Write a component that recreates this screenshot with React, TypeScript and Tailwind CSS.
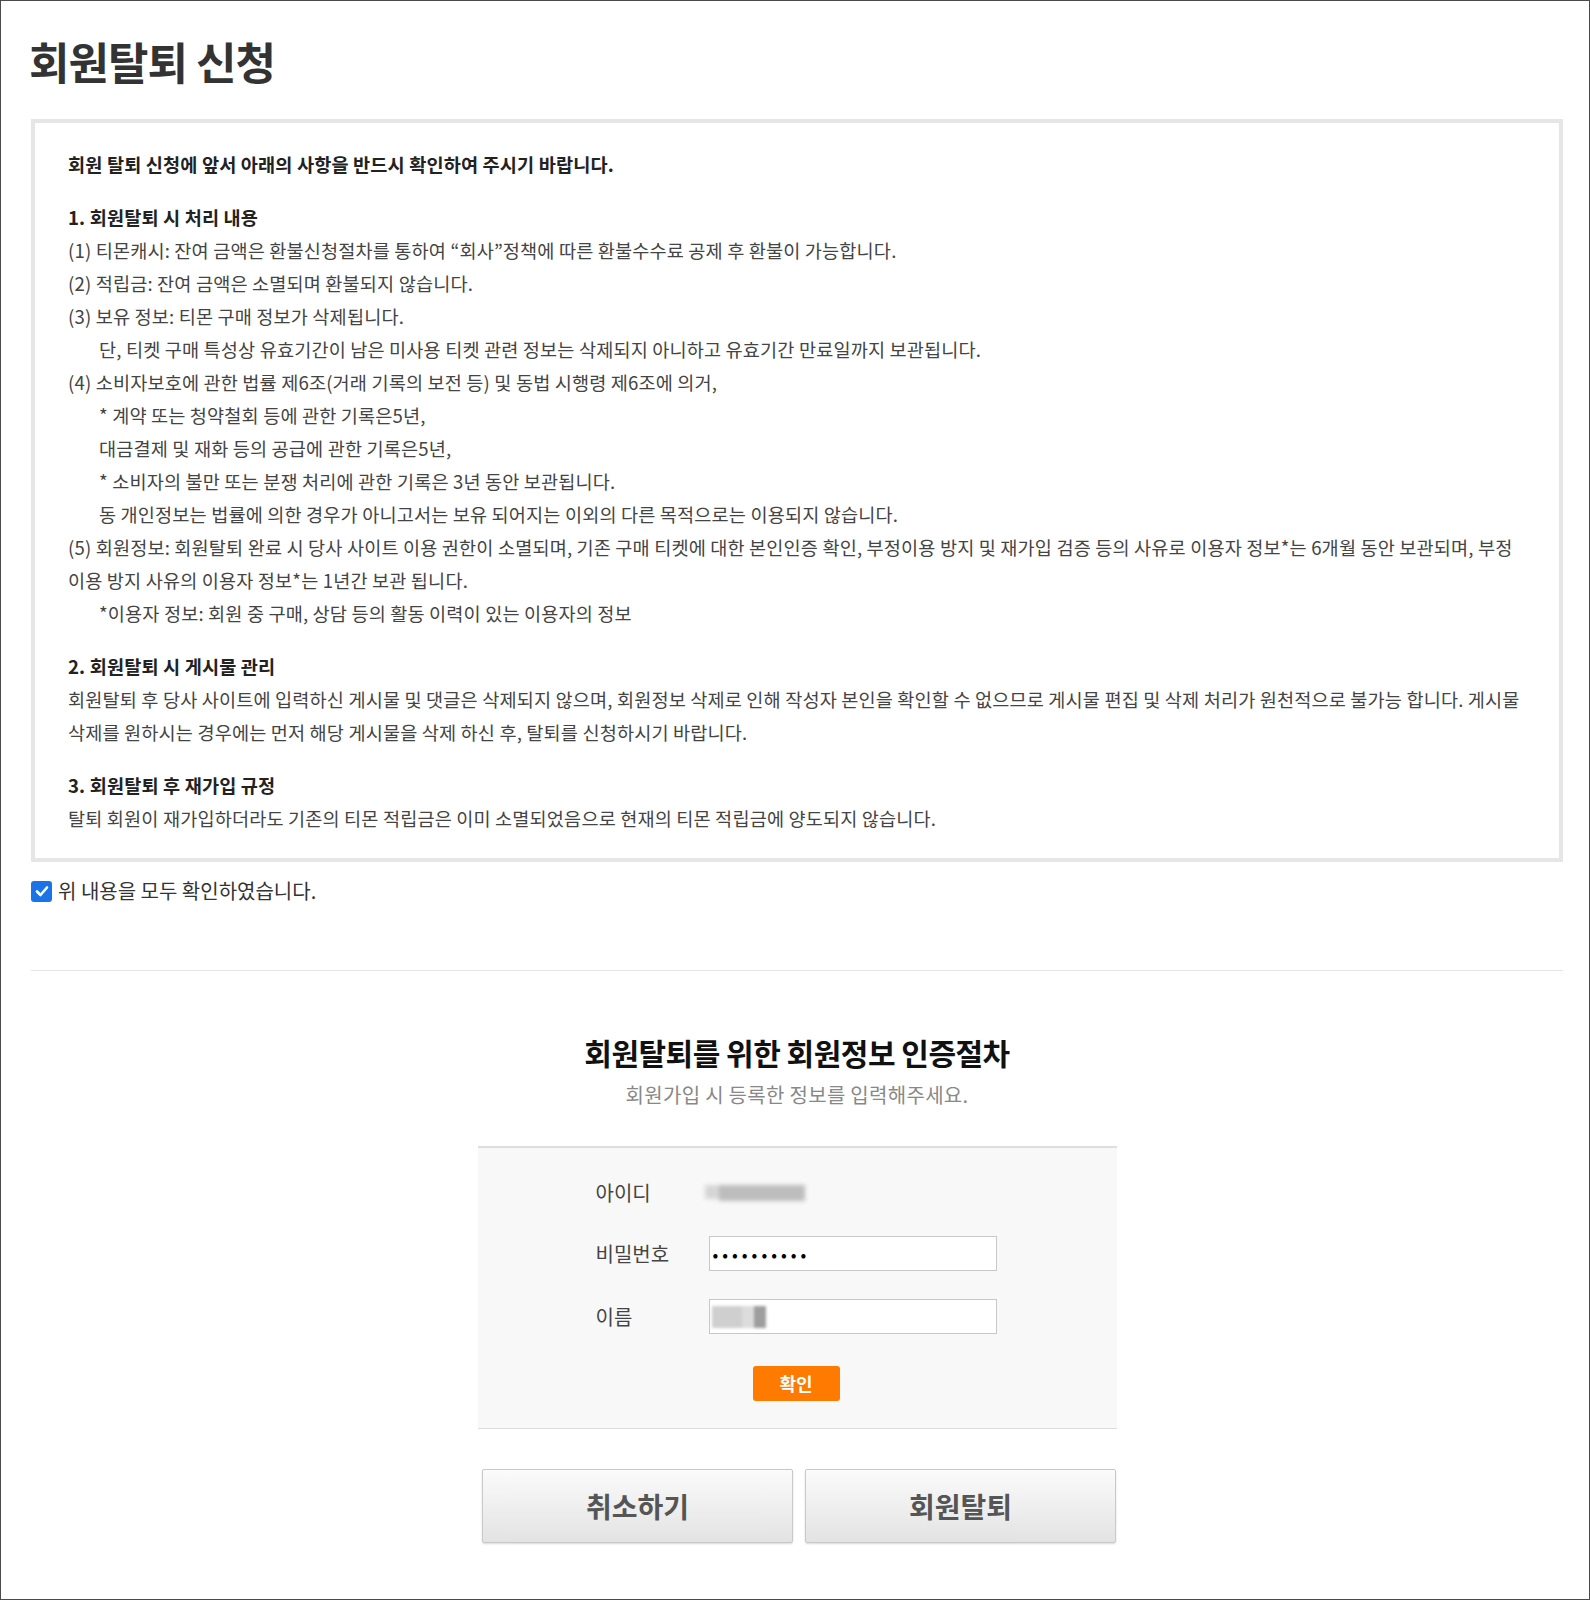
import { useState } from "react";

const font = "font-['Noto_Sans_CJK_KR','Noto_Sans',sans-serif]";

function Notice() {
  return (
    <div className="break-keep border-4 border-[#e6e6e6] px-[33px] pt-[24px] pb-[24px] text-[18.6px] leading-[33px] tracking-[0.15px] text-[#444]">
      <p className="font-bold text-[#222]">
        회원 탈퇴 신청에 앞서 아래의 사항을 반드시 확인하여 주시기 바랍니다.
      </p>

      <div className="mt-[20px]">
        <p className="font-bold text-[#222]">1. 회원탈퇴 시 처리 내용</p>
        <p>
          (1) 티몬캐시: 잔여 금액은 환불신청절차를 통하여 “회사”정책에 따른 환불수수료 공제 후
          환불이 가능합니다.
        </p>
        <p>(2) 적립금: 잔여 금액은 소멸되며 환불되지 않습니다.</p>
        <p>(3) 보유 정보: 티몬 구매 정보가 삭제됩니다.</p>
        <p className="pl-[31px]">
          단, 티켓 구매 특성상 유효기간이 남은 미사용 티켓 관련 정보는 삭제되지 아니하고
          유효기간 만료일까지 보관됩니다.
        </p>
        <p>(4) 소비자보호에 관한 법률 제6조(거래 기록의 보전 등) 및 동법 시행령 제6조에 의거,</p>
        <p className="pl-[31px]">* 계약 또는 청약철회 등에 관한 기록은5년,</p>
        <p className="pl-[31px]">대금결제 및 재화 등의 공급에 관한 기록은5년,</p>
        <p className="pl-[31px]">* 소비자의 불만 또는 분쟁 처리에 관한 기록은 3년 동안 보관됩니다.</p>
        <p className="pl-[31px]">
          동 개인정보는 법률에 의한 경우가 아니고서는 보유 되어지는 이외의 다른 목적으로는
          이용되지 않습니다.
        </p>
        <p className="whitespace-nowrap">
          (5) 회원정보: 회원탈퇴 완료 시 당사 사이트 이용 권한이 소멸되며, 기존 구매 티켓에 대한
          본인인증 확인, 부정이용 방지 및 재가입 검증 등의 사유로 이용자 정보*는 6개월 동안
          보관되며, 부정
          <br />
          이용 방지 사유의 이용자 정보*는 1년간 보관 됩니다.
        </p>
        <p className="pl-[31px]">*이용자 정보: 회원 중 구매, 상담 등의 활동 이력이 있는 이용자의 정보</p>
      </div>

      <div className="mt-[20px]">
        <p className="font-bold text-[#222]">2. 회원탈퇴 시 게시물 관리</p>
        <p className="whitespace-nowrap">
          회원탈퇴 후 당사 사이트에 입력하신 게시물 및 댓글은 삭제되지 않으며, 회원정보 삭제로 인해
          작성자 본인을 확인할 수 없으므로 게시물 편집 및 삭제 처리가 원천적으로 불가능 합니다.
          게시물
          <br />
          삭제를 원하시는 경우에는 먼저 해당 게시물을 삭제 하신 후, 탈퇴를 신청하시기 바랍니다.
        </p>
      </div>

      <div className="mt-[20px]">
        <p className="font-bold text-[#222]">3. 회원탈퇴 후 재가입 규정</p>
        <p>
          탈퇴 회원이 재가입하더라도 기존의 티몬 적립금은 이미 소멸되었음으로 현재의 티몬 적립금에
          양도되지 않습니다.
        </p>
      </div>
    </div>
  );
}

function Field({ label, children }: { label: string; children: React.ReactNode }) {
  return (
    <div className="flex items-center">
      <span className="w-[113px] text-[20px] text-[#444]">{label}</span>
      {children}
    </div>
  );
}

export default function App() {
  const [agreed, setAgreed] = useState(true);

  return (
    <div className={`${font} w-[1590px] h-[1600px] border border-[#4a4a4a] bg-white pl-[30px] pr-[26px]`}>
      <h1 className="-ml-[2px] pt-[30px] text-[44px] font-bold leading-[60px] tracking-[-1px] text-[#333]">
        회원탈퇴 신청
      </h1>

      <div className="mt-[28px]">
        <Notice />
      </div>

      <label className="mt-[14px] flex items-center gap-[6px] text-[20px] text-[#333]">
        <button
          type="button"
          onClick={() => setAgreed((v) => !v)}
          className={`flex h-[21px] w-[21px] items-center justify-center rounded-[3px] ${
            agreed ? "bg-[#1a73e8]" : "border-2 border-[#767676] bg-white"
          }`}
        >
          {agreed && (
            <svg viewBox="0 0 16 16" className="h-[16px] w-[16px]" fill="none">
              <path
                d="M3 8.5 6.5 12 13 4.5"
                stroke="white"
                strokeWidth="2.6"
                strokeLinecap="round"
                strokeLinejoin="round"
              />
            </svg>
          )}
        </button>
        위 내용을 모두 확인하였습니다.
      </label>

      <hr className="mt-[64px] border-t border-[#e5e5e5]" />

      <div className="flex flex-col items-center">
        <h2 className="mt-[61px] text-[30px] font-bold leading-[40px] tracking-[-0.5px] text-[#111]">
          회원탈퇴를 위한 회원정보 인증절차
        </h2>
        <p className="mt-[8px] text-[20px] tracking-[0.3px] text-[#888]">
          회원가입 시 등록한 정보를 입력해주세요.
        </p>

        <div className="mt-[36px] w-[639px] border-t-2 border-b border-[#dedede] bg-[#f8f8f8] pl-[118px] pt-[30px] pb-[27px]">
          <div className="flex flex-col gap-[28px]">
            <Field label="아이디">
              <div className="-ml-[4px] flex h-[16px] w-[100px] blur-[2px]">
                <div className="h-[14px] w-[14px] bg-[#d6d6d6]" />
                <div className="h-[16px] w-[86px] bg-[#bdbdbd]" />
              </div>
            </Field>
            <Field label="비밀번호">
              <div className="flex h-[35px] w-[288px] items-center border border-[#c8c8c8] bg-white px-[3px] text-[17px] tracking-[4px] text-black">
                ••••••••••
              </div>
            </Field>
            <Field label="이름">
              <div className="flex h-[35px] w-[288px] items-center border border-[#c8c8c8] bg-white px-[2px]">
                <div className="flex h-[22px] blur-[1.5px]">
                  <div className="w-[30px] bg-[#cfcfcf]" />
                  <div className="w-[12px] bg-[#dcdcdc]" />
                  <div className="w-[12px] bg-[#9e9e9e]" />
                </div>
              </div>
            </Field>
          </div>
          <div className="mt-[32px] flex pl-[157px]">
            <button className="h-[35px] w-[87px] rounded-[3px] bg-[#ff7a00] text-[18px] font-bold text-white">
              확인
            </button>
          </div>
        </div>

        <div className="ml-[4px] mt-[40px] flex gap-[12px]">
          <button className="h-[74px] w-[311px] rounded-[2px] border border-[#c9c9c9] bg-gradient-to-b from-[#fbfbfb] to-[#e3e3e3] text-[28px] font-bold text-[#555] shadow-[0_1px_2px_rgba(0,0,0,0.15)]">
            취소하기
          </button>
          <button className="h-[74px] w-[311px] rounded-[2px] border border-[#c9c9c9] bg-gradient-to-b from-[#fbfbfb] to-[#e3e3e3] text-[28px] font-bold text-[#555] shadow-[0_1px_2px_rgba(0,0,0,0.15)]">
            회원탈퇴
          </button>
        </div>
      </div>
    </div>
  );
}
